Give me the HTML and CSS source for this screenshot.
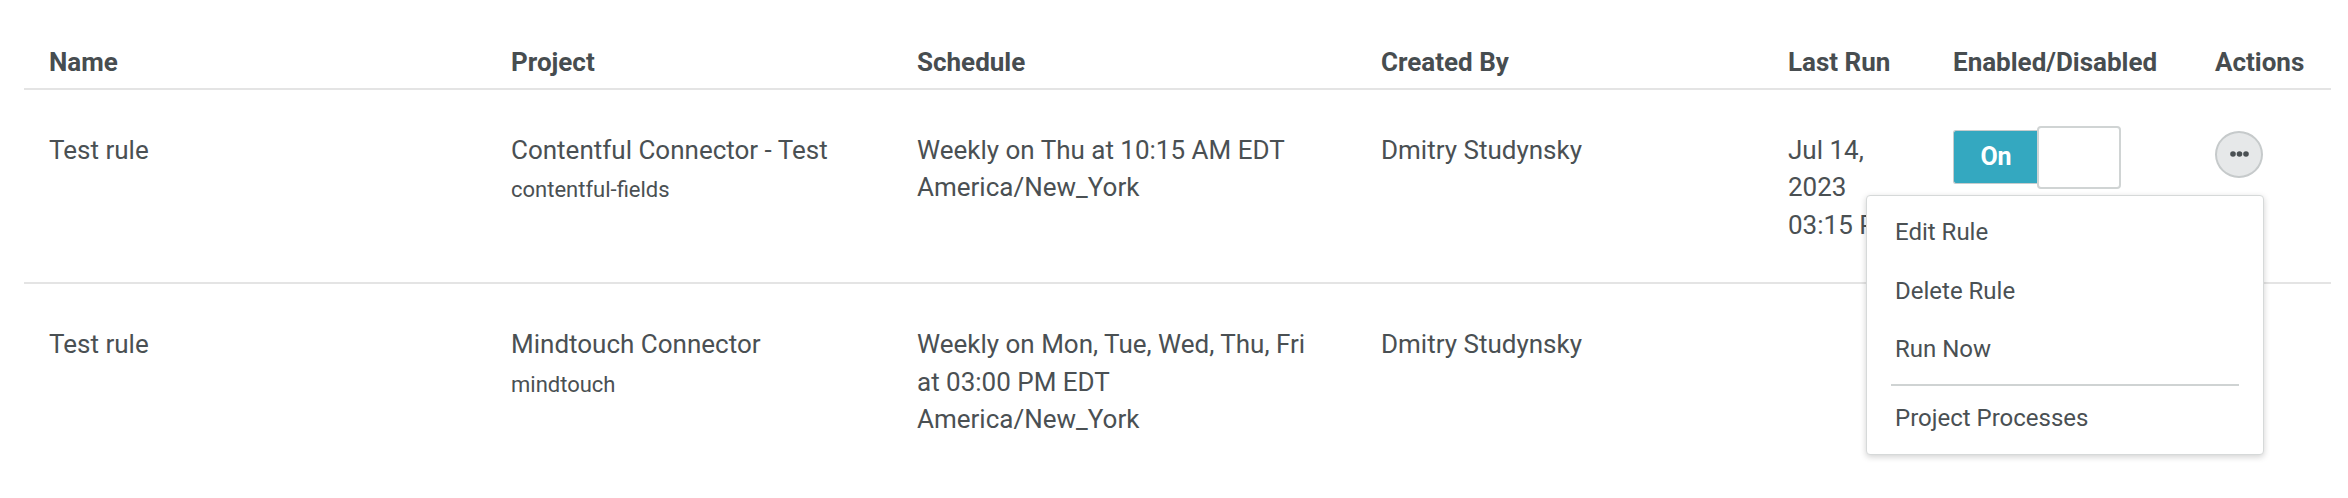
FILE: index.html
```html
<!DOCTYPE html>
<html lang="en">
<head>
    <meta charset="UTF-8">
    <meta name="viewport" content="width=device-width, initial-scale=1.0">
    <title>Scheduled Rules</title>
    <link rel="stylesheet" href="styles.css">
</head>
<body>

<main class="rules">
    <table class="rules-table">
        <colgroup>
            <col class="col-name">
            <col class="col-project">
            <col class="col-schedule">
            <col class="col-created">
            <col class="col-lastrun">
            <col class="col-enabled">
            <col class="col-actions">
        </colgroup>
        <thead>
            <tr>
                <th>Name</th>
                <th>Project</th>
                <th>Schedule</th>
                <th>Created By</th>
                <th>Last Run</th>
                <th>Enabled/Disabled</th>
                <th>Actions</th>
            </tr>
        </thead>
        <tbody>
            <tr>
                <td>Test rule</td>
                <td>
                    <div>Contentful Connector - Test</div>
                    <div class="sub">contentful-fields</div>
                </td>
                <td>Weekly on Thu at 10:15 AM EDT<br>America/New_York</td>
                <td>Dmitry Studynsky</td>
                <td>Jul 14, 2023 03:15 PM</td>
                <td>
                    <div class="toggle">
                        <span class="toggle-on">On</span>
                        <span class="toggle-knob"></span>
                    </div>
                </td>
                <td class="actions-cell">
                    <div class="actions">
                        <button class="dots-btn" aria-label="Actions">
                            <svg width="19" height="6" viewBox="0 0 19 6">
                                <circle cx="3" cy="3" r="2.8" fill="#4a5053"/>
                                <circle cx="9.5" cy="3" r="2.8" fill="#4a5053"/>
                                <circle cx="16" cy="3" r="2.8" fill="#4a5053"/>
                            </svg>
                        </button>
                        <ul class="menu">
                            <li>Edit Rule</li>
                            <li>Delete Rule</li>
                            <li>Run Now</li>
                            <li class="divider"></li>
                            <li>Project Processes</li>
                        </ul>
                    </div>
                </td>
            </tr>
            <tr>
                <td>Test rule</td>
                <td>
                    <div>Mindtouch Connector</div>
                    <div class="sub">mindtouch</div>
                </td>
                <td>Weekly on Mon, Tue, Wed, Thu, Fri<br>at 03:00 PM EDT<br>America/New_York</td>
                <td>Dmitry Studynsky</td>
                <td></td>
                <td></td>
                <td></td>
            </tr>
        </tbody>
    </table>
</main>

</body>
</html>
```

FILE: styles.css
```css
body {
    font-family: Roboto, 'Liberation Sans', Arial, sans-serif;
    margin: 0;
    padding: 0;
    background-color: #fff;
    color: #4a5053;
}
.rules {
    padding: 20px 17px 0 24px;
}
.rules-table {
    width: 2307px;
    border-collapse: collapse;
    table-layout: fixed;
}
.col-name { width: 462px; }
.col-project { width: 406px; }
.col-schedule { width: 464px; }
.col-created { width: 407px; }
.col-lastrun { width: 165px; }
.col-enabled { width: 262px; }
.col-actions { width: 141px; }
th, td {
    text-align: left;
    vertical-align: top;
    font-size: 26px;
    line-height: 37.5px;
}
th {
    font-weight: 700;
    color: #474d50;
    padding: 24px 25px 6px;
    border-bottom: 2px solid #e4e4e4;
    white-space: nowrap;
}
td {
    padding: 42px 25px 38px;
}
tbody tr:not(:last-child) td {
    border-bottom: 2px solid #e4e4e4;
}
.sub {
    font-size: 22px;
    margin-top: 2px;
}
.toggle {
    display: flex;
    align-items: center;
    margin-top: -6px;
}
.toggle-on {
    width: 85px;
    height: 54px;
    box-sizing: border-box;
    display: flex;
    align-items: center;
    justify-content: center;
    background-color: #34a8c0;
    border: 1px solid #c6cccd;
    border-right: none;
    border-radius: 3px 0 0 3px;
    color: #fff;
    font-weight: 700;
    font-size: 25px;
}
.toggle-knob {
    width: 84px;
    height: 63px;
    box-sizing: border-box;
    margin-left: -1px;
    background-color: #fff;
    border: 2px solid #d0d4d4;
    border-radius: 4px;
}
.actions {
    position: relative;
    width: 48px;
    margin-top: -1px;
}
.dots-btn {
    width: 48px;
    height: 47px;
    padding: 0;
    display: flex;
    align-items: center;
    justify-content: center;
    background-color: #e6e8e9;
    border: 2px solid #c6cacb;
    border-radius: 50%;
    cursor: pointer;
}
.menu {
    position: absolute;
    top: 64px;
    right: -1px;
    width: 398px;
    box-sizing: border-box;
    margin: 0;
    padding: 8px 0 6px;
    list-style: none;
    background-color: #fff;
    border: 1px solid #d6d9d9;
    border-radius: 4px;
    box-shadow: 0 2px 6px rgba(0, 0, 0, 0.18);
    z-index: 10;
}
.menu li {
    padding: 10.5px 28px;
    font-size: 24px;
    line-height: 37.5px;
    white-space: nowrap;
}
.menu li.divider {
    padding: 0;
    height: 2px;
    margin: 5px 24px 3px;
    background-color: #cfd3d3;
}
```
